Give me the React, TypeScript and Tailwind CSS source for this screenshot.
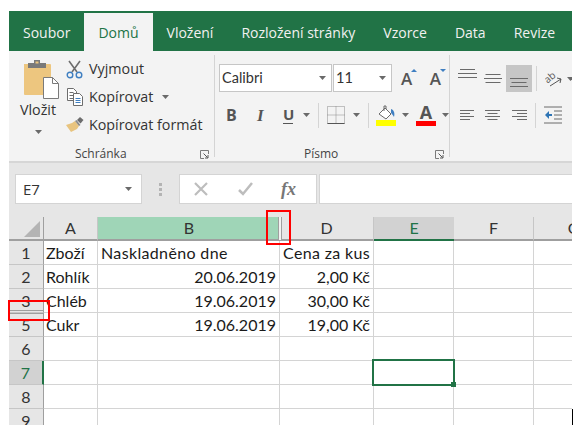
import React from 'react';

const uiFont = "font-['Open_Sans','Noto_Sans',sans-serif]";
const cellFont = "font-['Lato','Carlito',sans-serif]";

const tabs = ['Soubor', 'Domů', 'Vložení', 'Rozložení stránky', 'Vzorce', 'Data', 'Revize'];

const columns = [
  { name: 'A', w: 'w-[54px]' },
  { name: 'B', w: 'w-[182px]' },
  { name: 'D', w: 'w-[94px]' },
  { name: 'E', w: 'w-[80px]' },
  { name: 'F', w: 'w-[80px]' },
  { name: 'G', w: 'w-[80px]' },
];

const rows = [
  { n: '1', h: 'h-[24px]', cells: ['Zboží', 'Naskladněno dne', 'Cena za kus'] },
  { n: '2', h: 'h-[24px]', cells: ['Rohlík', '20.06.2019', '2,00 Kč'] },
  { n: '3', h: 'h-[24px]', cells: ['Chléb', '19.06.2019', '30,00 Kč'] },
  { n: '5', h: 'h-[24px]', cells: ['Cukr', '19.06.2019', '19,00 Kč'] },
  { n: '6', h: 'h-[24px]', cells: [] },
  { n: '7', h: 'h-[24px]', cells: [] },
  { n: '8', h: 'h-[24px]', cells: [] },
  { n: '9', h: 'h-[24px]', cells: [] },
];

function Caret({ className = '' }: { className?: string }) {
  return (
    <svg width="7" height="4" viewBox="0 0 7 4" className={`shrink-0 ${className}`}>
      <path d="M0 0h7L3.500 4z" fill="#6a6a6a" />
    </svg>
  );
}

function PasteIcon() {
  return (
    <svg width="36" height="40" viewBox="0 0 36 40" className="ml-[6px]">
      <path d="M1 5h26a1 1 0 0 1 1 1v30H2a1 1 0 0 1-1-1z" fill="#edc67f" />
      <path d="M5 4h6V1h6v3h6v5H5z" fill="#7a7a7a" />
      <rect x="12.500" y="2.500" width="3" height="2" fill="#edc67f" />
      <path d="M20.500 18.500h9l6 6v15h-15z" fill="#fff" stroke="#7a7a7a" />
      <path d="M29.500 18.500v6h6" fill="none" stroke="#7a7a7a" />
    </svg>
  );
}

function ScissorsIcon() {
  return (
    <svg width="17" height="19" viewBox="0 0 17 19">
      <path d="M3 1l8 11M14 1L6 12" stroke="#6d6d6d" strokeWidth="1.600" fill="none" />
      <circle cx="4" cy="15" r="2.800" fill="none" stroke="#3f7fc1" strokeWidth="1.400" />
      <circle cx="13" cy="15" r="2.800" fill="none" stroke="#3f7fc1" strokeWidth="1.400" />
    </svg>
  );
}

function CopyIcon() {
  return (
    <svg width="18" height="18" viewBox="0 0 18 18" fill="none" stroke="#6d6d6d">
      <path d="M1.500.5h6l3 3v9h-9z" fill="#fff" />
      <path d="M3.500 4.500h4M3.500 7.500h4M3.500 10.500h4" />
      <path d="M7.500 5.500h6l3 3v9h-9z" fill="#fff" />
      <path d="M9.500 10.500h5M9.500 12.500h5M9.500 14.500h5" stroke="#3f7fc1" />
    </svg>
  );
}

function BrushIcon() {
  return (
    <svg width="18" height="16" viewBox="0 0 18 16">
      <path d="M0 8l5 7 6-3 2-3-4-5-3 2z" fill="#e8c47f" />
      <path d="M9 4l4 5 1.500-1-4-5z" fill="#8a8a8a" />
      <path d="M11 3l3-3 3.500 3-3 3.500z" fill="#6d6d6d" />
    </svg>
  );
}

function AlignLines({ widths, align = 'center', gap = 4 }: { widths: number[]; align?: 'left' | 'center' | 'right'; gap?: number }) {
  const w = Math.max(...widths);
  return (
    <svg width={w} height={widths.length * gap} viewBox={`0 0 ${w} ${widths.length * gap}`}>
      {widths.map((l, i) => {
        const x = align === 'left' ? 0 : align === 'right' ? w - l : (w - l) / 2;
        return <rect key={i} x={x} y={i * gap + 1} width={l} height="1" fill="#6a6a6a" />;
      })}
    </svg>
  );
}

function Launcher() {
  return (
    <svg width="9" height="9" viewBox="0 0 9 9" fill="none" stroke="#7a7a7a">
      <path d="M8.500 4V.5H.5v8H4" />
      <path d="M3.500 3.500l4 4M8 5v3H5" stroke="#555" />
    </svg>
  );
}

function Separator({ className = '' }: { className?: string }) {
  return <div className={`w-px shrink-0 bg-[#d4d4d4] ${className}`} />;
}

function ClipboardGroup() {
  const rowClass = 'flex h-[28px] items-center gap-[4px]';
  return (
    <div className="flex w-[205px] shrink-0 flex-col">
      <div className="flex h-[91px] shrink-0">
        <div className="flex w-[57px] flex-col items-center pl-[1px] pt-[4px]">
          <PasteIcon />
          <span className="mt-[1px] text-[14.300px] leading-[20px] text-[#333]">Vložit</span>
          <Caret className="mt-[10px]" />
        </div>
        <div className="flex flex-col text-[14.300px] text-[#333]">
          <div className={rowClass}>
            <ScissorsIcon />
            <span className="ml-[2px]">Vyjmout</span>
          </div>
          <div className={rowClass}>
            <CopyIcon />
            <span className="ml-[1px]">Kopírovat</span>
            <Caret className="ml-[5px]" />
          </div>
          <div className={rowClass}>
            <BrushIcon />
            <span className="ml-[1px]">Kopírovat formát</span>
          </div>
        </div>
      </div>
      <div className="flex items-center justify-between pr-[5px]">
        <span className="ml-[66px] text-[12px] leading-[16px] text-[#444]">Schránka</span>
        <Launcher />
      </div>
    </div>
  );
}

function FontGroup() {
  return (
    <div className="flex w-[234px] shrink-0 flex-col pl-[4px]">
      <div className="mt-[9px] flex h-[28px] items-center">
        <div className={`flex h-[28px] w-[113px] items-center justify-between border border-[#c6c6c6] bg-white pl-[2px] pr-[5px] text-[14.500px] text-[#333] ${cellFont}`}>
          <span>Calibri</span>
          <Caret />
        </div>
        <div className={`ml-[1px] flex h-[28px] w-[59px] items-center justify-between border border-[#c6c6c6] bg-white pl-[2px] pr-[5px] text-[14.500px] text-[#333] ${cellFont}`}>
          <span>11</span>
          <Caret />
        </div>
        <div className={`ml-[9px] flex w-[40px] justify-between text-[17px] font-semibold text-[#555] ${uiFont}`}>
          <span className="relative leading-none">
            A<span className="absolute -right-[5px] -top-[1px] h-0 w-0 border-x-[3px] border-b-[3px] border-x-transparent border-b-[#3f7fc1]" />
          </span>
          <span className="relative leading-none">
            A<span className="absolute -right-[5px] -top-[1px] h-0 w-0 border-x-[3px] border-t-[3px] border-x-transparent border-t-[#3f7fc1]" />
          </span>
        </div>
      </div>
      <div className="mt-[10px] flex h-[26px] items-center">
        <span className="ml-[7px] w-[31px] text-[16px] font-bold leading-none text-[#555]">B</span>
        <span className="w-[26px] font-['Liberation_Serif',serif] text-[17px] font-bold italic leading-none text-[#555]">I</span>
        <span className="w-[10px] border-b border-[#555] text-[15px] font-bold leading-[17px] text-[#555]">U</span>
        <Caret className="ml-[10px]" />
        <Separator className="ml-[8px] h-[25px]" />
        <svg width="18" height="18" viewBox="0 0 18 18" className="ml-[8px] shrink-0" fill="none" stroke="#8a8a8a" strokeDasharray="1 1">
          <path d="M.5.5h17v17H.5zM9 .5v17M.5 9h17" />
          <path d="M.5 17.500h17" stroke="#555" strokeDasharray="none" />
        </svg>
        <Caret className="ml-[8px]" />
        <Separator className="ml-[8px] h-[25px]" />
        <svg width="20" height="21" viewBox="0 0 20 21" className="ml-[7px] shrink-0">
          <path d="M3 9l6-6 6 6-5 5z" fill="#fff" stroke="#6a6a6a" />
          <path d="M8 6V1h2v3" fill="none" stroke="#6a6a6a" />
          <path d="M15 4c3 1 4 4 3 8-1-2-2-3-3-4z" fill="#3f7fc1" />
          <rect x="0" y="15" width="20" height="6" fill="#ffff00" />
        </svg>
        <Caret className="ml-[6px]" />
        <div className="ml-[7px] flex w-[20px] shrink-0 flex-col items-center">
          <span className={`text-[18px] font-bold leading-[17px] text-[#555] ${uiFont}`}>A</span>
          <div className="h-[5px] w-[20px] bg-[#ff0000]" />
        </div>
        <Caret className="ml-[6px]" />
      </div>
      <div className="mt-auto flex items-center justify-between pr-[5px]">
        <span className="ml-[85px] text-[12px] leading-[16px] text-[#444]">Písmo</span>
        <Launcher />
      </div>
    </div>
  );
}

function AlignGroup() {
  return (
    <div className="flex flex-col overflow-hidden pl-[8px]">
      <div className="mt-[10px] flex h-[27px] items-center">
        <div className="flex h-[27px] w-[19px] shrink-0 items-start pt-[3px]"><AlignLines widths={[15, 19, 19]} /></div>
        <div className="ml-[7px] flex h-[27px] w-[18px] shrink-0 items-center"><AlignLines widths={[15, 18, 15]} /></div>
        <div className="ml-[4px] flex h-[27px] w-[26px] shrink-0 items-end justify-center bg-[#c6c6c6] pb-[3px]"><AlignLines widths={[18, 15, 18]} /></div>
        <Separator className="ml-[4px] h-[25px]" />
        <svg width="18" height="18" viewBox="0 0 18 18" className="ml-[8px] shrink-0" fill="none" stroke="#555">
          <text x="0" y="11" fontSize="10" fill="#555" stroke="none" transform="rotate(-40 5 9)" fontFamily="Open Sans">ab</text>
          <path d="M5 16l11-7M12 8l4 1-1 4" stroke="#555" />
        </svg>
        <Caret className="ml-[4px]" />
      </div>
      <div className="mt-[10px] flex h-[26px] items-center">
        <div className="ml-[2px] w-[14px] shrink-0"><AlignLines widths={[14, 10, 14, 10]} align="left" gap={3} /></div>
        <div className="ml-[11px] w-[17px] shrink-0"><AlignLines widths={[15, 10, 15, 10]} gap={3} /></div>
        <div className="ml-[10px] w-[15px] shrink-0"><AlignLines widths={[15, 10, 15, 10]} align="right" gap={3} /></div>
        <Separator className="ml-[8px] h-[25px]" />
        <svg width="18" height="18" viewBox="0 0 18 18" className="ml-[8px] shrink-0">
          <path d="M0 1h18M10 5h8M10 9h8M10 13h8M0 17h18" stroke="#6a6a6a" />
          <path d="M1 9l4-4v3h3v2H5v3z" fill="#2f75b5" />
        </svg>
      </div>
    </div>
  );
}

function Ribbon() {
  return (
    <div className={`flex h-[112px] shrink-0 border-b-2 border-[#d6d6d6] bg-[#f3f3f3] ${uiFont}`}>
      <div className="flex h-[111px] pt-[4px]">
        <ClipboardGroup />
        <Separator className="h-[102px]" />
        <FontGroup />
        <Separator className="h-[102px]" />
        <AlignGroup />
      </div>
    </div>
  );
}

function FormulaBar() {
  return (
    <div className="flex h-[54px] shrink-0 bg-[#e6e6e6] pl-[6px] pt-[11px]">
      <div className={`flex h-[30px] w-[127px] items-center justify-between border border-[#d4d4d4] bg-white pl-[7px] pr-[9px] text-[15px] text-[#333] ${uiFont}`}>
        <span>E7</span>
        <Caret />
      </div>
      <div className="ml-[17px] flex h-[30px] w-[3px] flex-col justify-center gap-[2px]">
        <div className="h-[3px] w-[3px] bg-[#b4b4b4]" />
        <div className="h-[3px] w-[3px] bg-[#b4b4b4]" />
        <div className="h-[3px] w-[3px] bg-[#b4b4b4]" />
      </div>
      <div className="ml-[17px] flex h-[30px] w-[138px] items-center border border-[#d4d4d4] bg-white">
        <svg width="14" height="14" viewBox="0 0 14 14" className="ml-[14px]" stroke="#bdbdbd" strokeWidth="2.200">
          <path d="M1 1l12 12M13 1L1 13" />
        </svg>
        <svg width="16" height="14" viewBox="0 0 16 14" className="ml-[30px]" fill="none" stroke="#bdbdbd" strokeWidth="2.500">
          <path d="M1 8l4 4 9-11" />
        </svg>
        <span className="ml-[27px] font-['Liberation_Serif',serif] text-[18px] font-bold italic leading-none text-[#777]">fx</span>
      </div>
      <div className="ml-[2px] h-[30px] flex-1 border-y border-l border-[#d4d4d4] bg-white" />
    </div>
  );
}

function HeaderRow() {
  return (
    <div className={`flex h-[24px] shrink-0 text-[16px] text-[#333] ${cellFont}`}>
      <div className="relative w-[35px] shrink-0 border-r border-b-2 border-[#9f9f9f] bg-[#e6e6e6]">
        <div className="absolute bottom-[2px] right-[3px] h-0 w-0 border-b-[16px] border-l-[16px] border-b-[#b4b4b4] border-l-transparent" />
      </div>
      {columns.map((c) => (
        <div
          key={c.name}
          className={`flex shrink-0 items-center justify-center border-b-2 ${c.w} ${
            c.name === 'B'
              ? 'border-[#9f9f9f] bg-[#9fd5b7]'
              : c.name === 'E'
                ? 'border-b-[#217346] bg-[#d2d2d2] text-[#217346]'
                : 'border-[#9f9f9f] border-r bg-[#e6e6e6] border-r-[#c6c6c6]'
          }`}
        >
          {c.name}
        </div>
      ))}
    </div>
  );
}

function SheetRow({ row, index }: { row: (typeof rows)[number]; index: number }) {
  const selected = row.n === '7';
  return (
    <div className={`flex shrink-0 text-[16px] text-[#1a1a1a] ${row.h} ${cellFont}`}>
      <div
        className={`flex w-[35px] shrink-0 items-center justify-center border-r border-b ${
          selected
            ? 'border-r-2 border-r-[#217346] border-b-[#c6c6c6] bg-[#d2d2d2] text-[#217346]'
            : 'border-r-[#9f9f9f] border-b-[#c6c6c6] bg-[#e6e6e6] text-[#333]'
        }`}
      >
        {row.n}
      </div>
      {columns.map((c, i) => {
        const value = row.cells[i];
        const right = index > 0 && (i === 1 || i === 2);
        const wide = index === 0 && i > 0;
        return (
          <div
            key={c.name}
            className={`flex shrink-0 items-center whitespace-nowrap border-r border-b border-[#d4d4d4] ${c.w} ${
              right ? 'justify-end pr-[3px]' : i === 0 ? 'pl-[2px]' : 'pl-[3px]'
            } ${wide ? 'tracking-[0.35px]' : ''}`}
          >
            {value}
          </div>
        );
      })}
    </div>
  );
}

export default function App() {
  return (
    <div className="relative h-[437px] w-[582px] overflow-hidden bg-white pl-[9px] pt-[11px]">
      <div className="flex h-[414px] w-[563px] flex-col overflow-hidden">
        <div className={`flex h-[40px] shrink-0 items-end bg-[#217346] text-[14px] text-[#f1f1f1] ${uiFont}`}>
          {tabs.map((t) => (
            <div
              key={t}
              className={`flex h-[38px] items-center whitespace-nowrap px-[14px] ${
                t === 'Domů' ? 'bg-[#f3f3f3] text-[#217346]' : ''
              }`}
            >
              {t}
            </div>
          ))}
        </div>
        <Ribbon />
        <FormulaBar />
        <HeaderRow />
        {rows.map((r, i) => (
          <SheetRow key={r.n} row={r} index={i} />
        ))}
      </div>

      {/* výběr buňky E7 */}
      <div className="absolute left-[372px] top-[359px] h-[27px] w-[83px] border-2 border-[#217346]" />
      <div className="absolute left-[451px] top-[382px] h-[5px] w-[5px] bg-[#217346]" />

      {/* skrytý řádek 4 a sloupec C */}
      <div className="absolute left-[9px] top-[310px] h-[4px] w-[34px] border-y border-[#9f9f9f]" />
      <div className="absolute left-[278px] top-[217px] h-[23px] w-[4px] border-x border-[#9f9f9f] bg-[#f3f3f3]" />

      {/* červené značky */}
      <div className="absolute left-[266px] top-[210px] h-[35px] w-[25px] border-2 border-[#ff0000]" />
      <div className="absolute left-[8px] top-[300px] h-[21px] w-[42px] border-2 border-[#ff0000]" />

      <div className="absolute left-[572px] top-[409px] h-[16px] w-px bg-black" />
    </div>
  );
}
